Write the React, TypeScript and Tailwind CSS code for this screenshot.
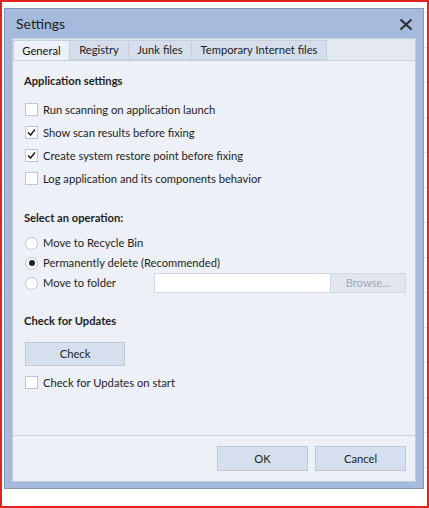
import React from "react";

const Checkbox = ({ checked, label }: { checked?: boolean; label: string }) => (
  <div className="flex items-center h-[23px]">
    <div className="w-[13px] h-[13px] ml-[12px] bg-white border border-[#bcc5d3] flex items-center justify-center">
      {checked && (
        <svg width="9" height="9" viewBox="0 0 9 9">
          <path d="M1 4.5 L3.5 7 L8 1.5" fill="none" stroke="#222" strokeWidth="1.6" />
        </svg>
      )}
    </div>
    <span className="ml-[5px]">{label}</span>
  </div>
);

const Radio = ({ checked, label, w = "" }: { checked?: boolean; label: string; w?: string }) => (
  <div className={`flex items-center h-[20px] shrink-0 whitespace-nowrap ${w}`}>
    <div className="w-[13px] h-[13px] ml-[12px] shrink-0 rounded-full bg-white border border-[#bcc5d3] flex items-center justify-center">
      {checked && <div className="w-[6px] h-[6px] rounded-full bg-[#222]" />}
    </div>
    <span className="ml-[5px]">{label}</span>
  </div>
);

const Tab = ({ label, active, w }: { label: string; active?: boolean; w: string }) => (
  <div
    className={
      active
        ? `${w} h-[21px] -mb-px flex items-center justify-center whitespace-nowrap bg-[#edf0f6] border border-b-0 border-[#c6cfdf] text-[#111]`
        : `${w} h-[20px] flex items-center justify-center whitespace-nowrap bg-[#d6deec] border border-l-0 border-[#c6cfdf] text-[#222]`
    }
  >
    {label}
  </div>
);

export default function App() {
  return (
    <div className="w-[429px] h-[508px] border-2 border-[#e3231f] bg-white bg-[image:repeating-linear-gradient(180deg,transparent_0px,transparent_10px,#e8e8e8_10px,#e8e8e8_11px,transparent_11px,transparent_35px)] bg-[length:100%_470px] bg-no-repeat font-['Lato',sans-serif] text-[11.2px] text-[#1e1e1e] leading-[16px]">
      <div className="ml-[2px] mt-[6px] w-[420px] h-[481px] bg-[#a6badd] border border-[#8595b4] flex flex-col px-[7px] pb-[6px]">
        <div className="h-[29px] flex items-center justify-between pl-[4px] pr-[3px] pt-[1px]">
          <span className="text-[14px] text-[#222]">Settings</span>
          <svg width="14" height="13" viewBox="0 0 14 13">
            <path d="M1.5 1.5 L12.5 11.5 M12.5 1.5 L1.5 11.5" stroke="#2f2f2f" strokeWidth="2.2" />
          </svg>
        </div>
        <div className="flex-1 flex flex-col bg-[#e3e8f1] border border-[#c3ccdc]">
          <div className="flex pt-px">
            <Tab label="General" active w="w-[57px]" />
            <Tab label="Registry" w="w-[59px]" />
            <Tab label="Junk files" w="w-[63px]" />
            <Tab label="Temporary Internet files" w="w-[135px]" />
          </div>
          <div className="flex-1 flex flex-col bg-[#edf0f6] border-t border-b border-[#c6cfdf]">
            <div className="mt-[12px] ml-[11px] font-bold">Application settings</div>
            <div className="mt-[9px]">
              <Checkbox label="Run scanning on application launch" />
              <Checkbox checked label="Show scan results before fixing" />
              <Checkbox checked label="Create system restore point before fixing" />
              <Checkbox label="Log application and its components behavior" />
            </div>
            <div className="mt-[20px] ml-[11px] font-bold">Select an operation:</div>
            <div className="mt-[7px]">
              <Radio label="Move to Recycle Bin" />
              <Radio checked label="Permanently delete (Recommended)" />
              <div className="flex items-center h-[20px]">
                <Radio label="Move to folder" w="w-[141px]" />
                <div className="w-[177px] h-[20px] bg-white border border-[#d3d9e4]" />
                <div className="w-[75px] h-[20px] flex items-center justify-center bg-[#e2e6ee] border border-l-0 border-[#d3d9e4] text-[#a3a9b5]">
                  Browse...
                </div>
              </div>
            </div>
            <div className="mt-[20px] ml-[11px] font-bold">Check for Updates</div>
            <div className="mt-[13px] ml-[12px] w-[100px] h-[24px] flex items-center justify-center bg-[#d6dfee] border border-[#c0c8d8]">
              Check
            </div>
            <div className="mt-[5px]">
              <Checkbox label="Check for Updates on start" />
            </div>
          </div>
          <div className="h-[45px] bg-[#edf0f6] flex items-center justify-end gap-[7px] pr-[9px]">
            <div className="w-[91px] h-[25px] flex items-center justify-center bg-[#d6dfee] border border-[#c0c8d8]">OK</div>
            <div className="w-[91px] h-[25px] flex items-center justify-center bg-[#d6dfee] border border-[#c0c8d8]">Cancel</div>
          </div>
        </div>
      </div>
    </div>
  );
}
